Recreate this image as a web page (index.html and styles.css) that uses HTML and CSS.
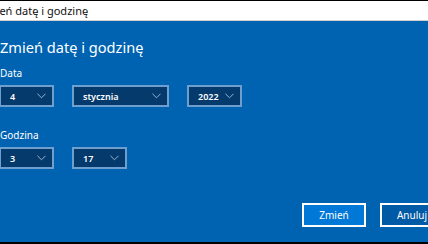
FILE: index.html
```html
<!DOCTYPE html>
<html lang="pl">
<head>
  <meta charset="UTF-8" />
  <meta name="viewport" content="width=device-width, initial-scale=1.0"/>
  <title>Zmień datę i godzinę</title>
  <link rel="stylesheet" href="styles.css">
</head>
<body>
  <div class="titlebar">
    <span class="title-text">Zmień datę i godzinę</span>
  </div>

  <div class="dialog">
    <h1>Zmień datę i godzinę</h1>

    <div class="label">Data</div>
    <div class="row">
      <div class="select w-small"><span>4</span><svg class="chev" viewBox="0 0 10 6"><path d="M0.5 0.5 L5 5 L9.5 0.5"/></svg></div>
      <div class="select w-month"><span>stycznia</span><svg class="chev" viewBox="0 0 10 6"><path d="M0.5 0.5 L5 5 L9.5 0.5"/></svg></div>
      <div class="select w-small"><span>2022</span><svg class="chev" viewBox="0 0 10 6"><path d="M0.5 0.5 L5 5 L9.5 0.5"/></svg></div>
    </div>

    <div class="label label-time">Godzina</div>
    <div class="row">
      <div class="select w-small"><span>3</span><svg class="chev" viewBox="0 0 10 6"><path d="M0.5 0.5 L5 5 L9.5 0.5"/></svg></div>
      <div class="select w-small"><span>17</span><svg class="chev" viewBox="0 0 10 6"><path d="M0.5 0.5 L5 5 L9.5 0.5"/></svg></div>
    </div>

    <div class="buttons">
      <button class="btn btn-primary">Zmień</button>
      <button class="btn">Anuluj</button>
    </div>
  </div>
</body>
</html>
```

FILE: styles.css
```css
body {
  margin: 0;
  width: 428px;
  height: 244px;
  overflow: hidden;
  background: #000;
  font-family: "Noto Sans", "Open Sans", sans-serif;
}
.titlebar {
  margin-top: 1px;
  height: 19px;
  background: #fff;
  border-bottom: 1px solid #d0d0d0;
  display: flex;
  align-items: center;
  overflow: hidden;
}
.title-text {
  margin-left: -20px;
  font-size: 11px;
  color: #111;
  white-space: nowrap;
}
.dialog {
  height: 221px;
  background: #0063b1;
  color: #fff;
  display: flex;
  flex-direction: column;
  overflow: hidden;
}
h1 {
  margin: 16px 0 0 0;
  font-size: 14.6px;
  line-height: 20px;
  font-weight: 400;
  white-space: nowrap;
}
.label {
  margin-top: 10px;
  font-size: 10px;
  line-height: 12px;
}
.label-time {
  margin-top: 22px;
}
.row {
  display: flex;
  gap: 18px;
  margin-top: 6px;
  margin-left: -1px;
}
.select {
  box-sizing: border-box;
  height: 22px;
  display: flex;
  align-items: center;
  justify-content: space-between;
  padding: 0 6px 0 9px;
  background: #053a6d;
  border: 2px solid #6e9fcf;
  font-size: 9px;
  font-weight: 600;
}
.w-small {
  width: 55px;
}
.w-month {
  width: 97px;
}
.chev {
  width: 9px;
  height: 6px;
  fill: none;
  stroke: #a8c3df;
  stroke-width: 1;
}
.buttons {
  margin-top: auto;
  margin-bottom: 15px;
  margin-right: -16px;
  display: flex;
  justify-content: flex-end;
  gap: 14px;
}
.btn {
  box-sizing: border-box;
  width: 64px;
  height: 24px;
  border: 2px solid #fff;
  background: #005aa6;
  color: #fff;
  font-family: inherit;
  font-size: 10px;
  padding: 0;
}
.btn-primary {
  background: #0078d7;
}
```
